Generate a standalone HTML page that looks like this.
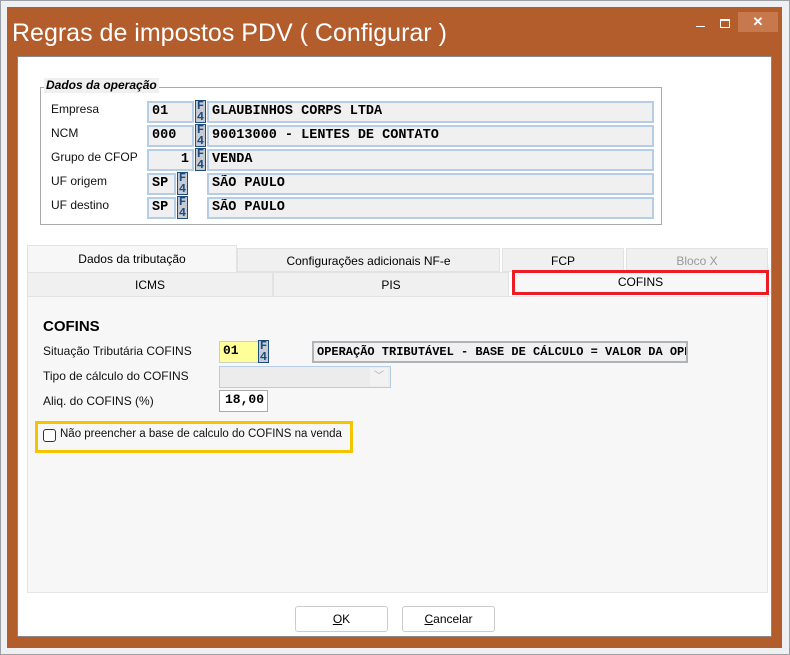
<!DOCTYPE html>
<html><head><meta charset="utf-8"><style>
*{box-sizing:border-box;margin:0;padding:0}
body{width:790px;height:655px;background:#eef0f2;position:relative;overflow:hidden;font-family:"Liberation Sans",sans-serif;font-size:12px;color:#000}
.a{position:absolute}
.lbl{position:absolute;font-size:12px;color:#111}
.inp{position:absolute;background:#f0f0f0;border:2px solid #b5cde6;font-family:"Liberation Mono",monospace;font-weight:bold;font-size:13.5px;padding-left:3px;line-height:18px;white-space:nowrap;overflow:hidden}
.f4{position:absolute;width:11px;height:23px;background:#c8ccd2;border:1px solid #1b4c80;color:#1b4c80;font:bold 12px/10.5px "Liberation Mono",monospace;text-align:center;overflow:hidden}
.tab{position:absolute;border:1px solid #e2e2e2;background:#f0f0f0;text-align:center;font-size:12px;line-height:24px}
</style></head><body>
<div class="a" style="left:0;top:0;width:790px;height:655px;border:1px solid #9aa0a6"></div>
<div class="a" style="left:7px;top:7px;width:775px;height:641px;background:#b35c2c"></div>
<div class="a" style="left:12px;top:15px;color:#fff;font-size:25px;line-height:36px">Regras de impostos PDV ( Configurar )</div>
<div class="a" style="left:696px;top:26px;width:9px;height:1px;background:#fff"></div>
<div class="a" style="left:720px;top:19px;width:10px;height:9px;border:1px solid #fff;border-top-width:2px"></div>
<div class="a" style="left:738px;top:12px;width:40px;height:20px;background:#c7784d;color:#fff;text-align:center;font:bold 13px/20px 'Liberation Sans',sans-serif">✕</div>
<div class="a" style="left:17px;top:56px;width:755px;height:581px;background:#fff;border:1px solid #888"></div>
<div class="a" style="left:40px;top:87px;width:622px;height:138px;border:1px solid #aaa"></div>
<div class="a" style="left:44px;top:78px;padding:0 2px;background:#f0f0f0;font-weight:bold;font-style:italic;font-size:12px;line-height:15px">Dados da operação</div>
<div class="lbl" style="left:51px;top:102px">Empresa</div>
<div class="lbl" style="left:51px;top:126px">NCM</div>
<div class="lbl" style="left:51px;top:150px">Grupo de CFOP</div>
<div class="lbl" style="left:51px;top:174px">UF origem</div>
<div class="lbl" style="left:51px;top:198px">UF destino</div>
<div class="inp" style="left:147px;top:101px;width:47px;height:22px">01</div>
<div class="f4" style="left:195px;top:100px">F<br>4</div>
<div class="inp" style="left:207px;top:101px;width:447px;height:22px">GLAUBINHOS CORPS LTDA</div>
<div class="inp" style="left:147px;top:125px;width:47px;height:22px">000</div>
<div class="f4" style="left:195px;top:124px">F<br>4</div>
<div class="inp" style="left:207px;top:125px;width:447px;height:22px">90013000 - LENTES DE CONTATO</div>
<div class="inp" style="left:147px;top:149px;width:47px;height:22px;text-align:right;padding-right:3px">1</div>
<div class="f4" style="left:195px;top:148px">F<br>4</div>
<div class="inp" style="left:207px;top:149px;width:447px;height:22px">VENDA</div>
<div class="inp" style="left:147px;top:173px;width:29px;height:22px">SP</div>
<div class="f4" style="left:177px;top:172px">F<br>4</div>
<div class="inp" style="left:207px;top:173px;width:447px;height:22px">SÃO PAULO</div>
<div class="inp" style="left:147px;top:197px;width:29px;height:22px">SP</div>
<div class="f4" style="left:177px;top:196px">F<br>4</div>
<div class="inp" style="left:207px;top:197px;width:447px;height:22px">SÃO PAULO</div>
<div class="a" style="left:27px;top:296px;width:741px;height:297px;background:#f7f7f7;border:1px solid #e4e4e4"></div>
<div class="tab" style="left:27px;top:245px;width:210px;height:28px;background:#f7f7f7;border-bottom:none;line-height:26px">Dados da tributação</div>
<div class="tab" style="left:237px;top:248px;width:263px;height:24px">Configurações adicionais NF-e</div>
<div class="tab" style="left:502px;top:248px;width:122px;height:24px">FCP</div>
<div class="tab" style="left:626px;top:248px;width:142px;height:24px;color:#999">Bloco X</div>
<div class="tab" style="left:27px;top:272px;width:246px;height:25px">ICMS</div>
<div class="tab" style="left:273px;top:272px;width:236px;height:25px">PIS</div>
<div class="tab" style="left:512px;top:270px;width:257px;height:25px;background:#f7f7f7;border:3px solid #ec1c24;line-height:19px">COFINS</div>
<div class="a" style="left:43px;top:318px;font-weight:bold;font-size:15px">COFINS</div>
<div class="lbl" style="left:43px;top:344px">Situação Tributária COFINS</div>
<div class="lbl" style="left:43px;top:369px">Tipo de cálculo do COFINS</div>
<div class="lbl" style="left:43px;top:394px">Aliq. do COFINS (%)</div>
<div class="inp" style="left:219px;top:341px;width:40px;height:22px;background:#ffff99;border:1px solid #ccc;font-size:13px">01</div>
<div class="f4" style="left:258px;top:340px">F<br>4</div>
<div class="inp" style="left:312px;top:341px;width:376px;height:22px;border-color:#b0b4b8;font-size:12px">OPERAÇÃO TRIBUTÁVEL - BASE DE CÁLCULO = VALOR DA OPER</div>
<div class="a" style="left:219px;top:366px;width:172px;height:22px;background:#ececec;border:1px solid #b5cde6"><span style="position:absolute;right:2px;top:1px;width:18px;height:18px;background:#f2f2f2;color:#aaa;font-size:10px;text-align:center;line-height:18px">﹀</span></div>
<div class="inp" style="left:219px;top:390px;width:49px;height:22px;background:#fff;border:1px solid #aaa;text-align:right;padding-right:3px;font-size:13px">18,00</div>
<div class="a" style="left:35px;top:421px;width:318px;height:32px;border:3px solid #f5c400"></div>
<div class="a" style="left:43px;top:429px;width:13px;height:13px;border:1px solid #333;border-radius:3px;background:#fff"></div>
<div class="lbl" style="left:60px;top:428px;font-size:11.5px">Não preencher a base de calculo do COFINS na venda</div>
<div class="a" style="left:295px;top:606px;width:93px;height:26px;border:1px solid #ccc;border-radius:3px;background:#fff;text-align:center;line-height:24px"><u>O</u>K</div>
<div class="a" style="left:402px;top:606px;width:93px;height:26px;border:1px solid #ccc;border-radius:3px;background:#fff;text-align:center;line-height:24px"><u>C</u>ancelar</div>
</body></html>
